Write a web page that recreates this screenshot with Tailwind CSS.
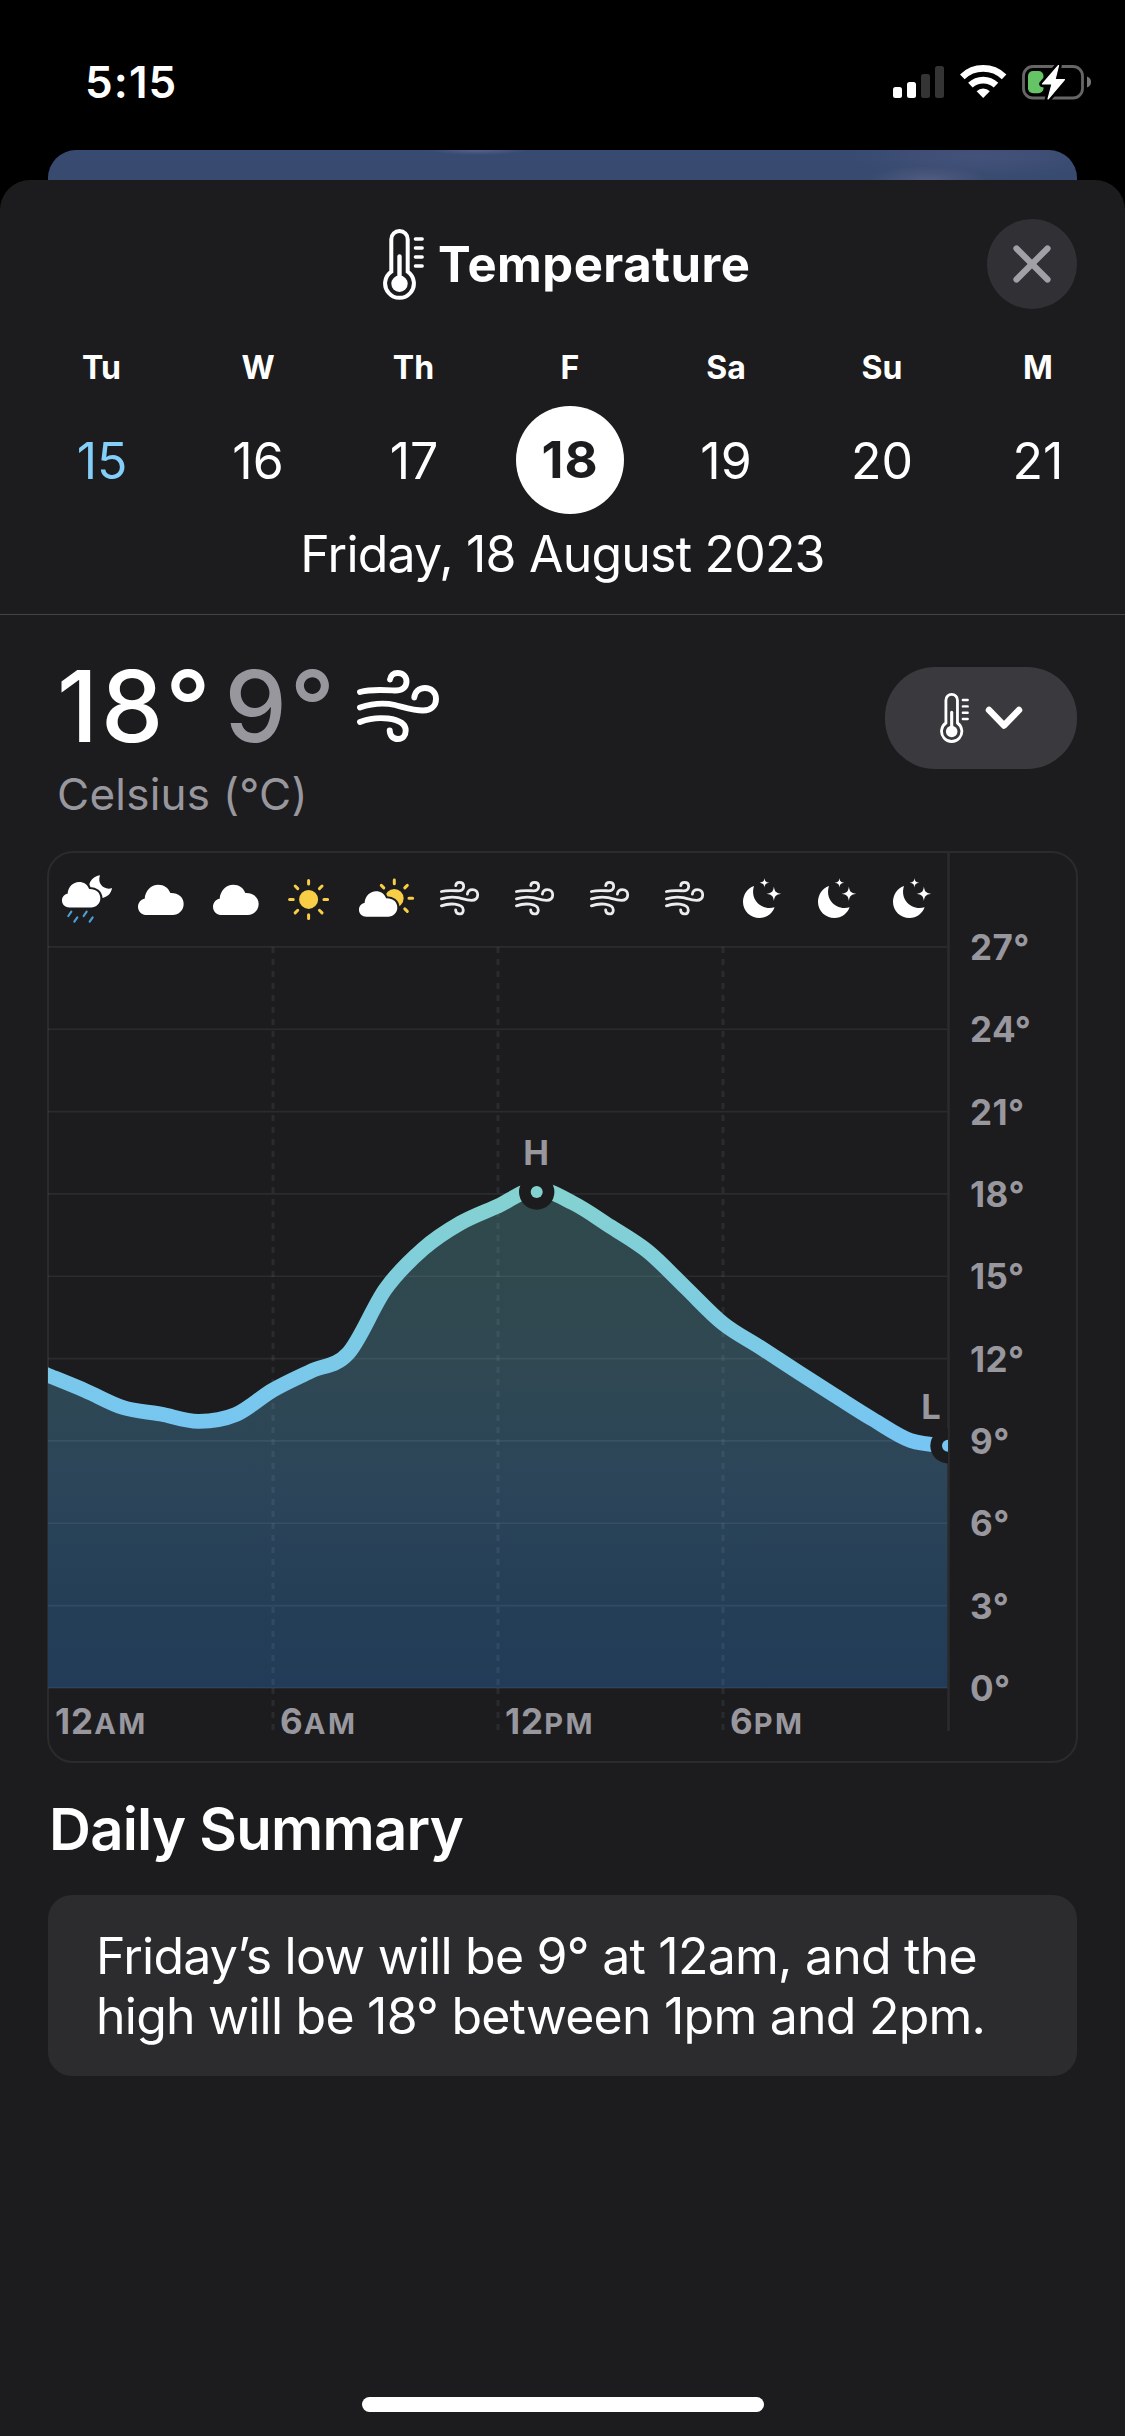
<!DOCTYPE html>
<html lang="en">
<head>
<meta charset="utf-8">
<title>Temperature</title>
<script src="https://cdn.jsdelivr.net/npm/@tailwindcss/browser@4"></script>
</head>
<body class="bg-black">
<div class="flex h-[2436px] w-[1125px] flex-col overflow-hidden bg-black font-['Inter',sans-serif] text-white">

  <svg width="0" height="0" class="absolute">
    <defs>
      <symbol id="thermo" viewBox="0 0 41 71">
        <path d="M8.3 42.6V10.2a8.2 8.2 0 0 1 16.4 0V42.6A14.4 14.4 0 1 1 8.3 42.6Z" fill="none" stroke="#fff" stroke-width="4"/>
        <circle cx="16.5" cy="54.7" r="8.2" fill="#fff"/>
        <path d="M16.5 27.4V52" stroke="#fff" stroke-width="4.4" stroke-linecap="round"/>
        <path d="M32.4 10h6.8M32.4 19h6.8M32.4 28h6.8M32.4 37h6.8" stroke="#fff" stroke-width="3.4" stroke-linecap="round"/>
      </symbol>
      <symbol id="wind" viewBox="0 0 82 72">
        <g fill="none" stroke="currentColor" stroke-width="5.9" stroke-linecap="round">
          <path d="M3 22C14 19 28 20 37 20.5C45 21 49.5 17.5 49.5 11.5C49.5 6.5 46 3 40.5 3C36.5 3 33.5 5.5 33 9.5"/>
          <path d="M3 37.5C12 34.5 25 32 38 35C48 37.5 57 40.5 66 40.5C74 40.5 79 36 79 29C79 22 74 18 68 18C61.5 18 58 22 57.3 27.5"/>
          <path d="M3 52C12 48.5 22 47.5 31 48.5C42 50 48.7 53 48.7 60.5C48.7 65.5 46 69 41 69C36 69 33 66 32.7 60.5"/>
        </g>
      </symbol>
      <path id="cloudshape" d="M27 91C11 91 0 80 0 66C0 54 8 44 20 42C22 18 39 0 61 0C78 0 91 9 97 25C120 24 137 37 137 58C137 77 122 91 104 91Z"/>
      <symbol id="w-cloud" viewBox="0 0 75 94">
        <use href="#cloudshape" fill="#fff" transform="translate(15 31.7) scale(.3333)"/>
      </symbol>
      <symbol id="w-rain" viewBox="0 0 75 94">
        <g transform="translate(-8 -13) scale(.3333)">
          <path d="M180 106C160 109 146 125 148 142C150 162 166 176 184 174C201 173 214 160 216 144C196 152 170 134 180 106Z" fill="#fff"/>
          <g transform="translate(66 126) scale(.84)">
            <use href="#cloudshape" fill="#1c1c1e" stroke="#1c1c1e" stroke-width="15"/>
            <use href="#cloudshape" fill="#fff"/>
          </g>
          <path d="M94 215L85 228M112 232L103 245M140 215L131 228M158 232L149 245" stroke="#4c9fd6" stroke-width="6.5" stroke-linecap="round"/>
        </g>
      </symbol>
      <symbol id="w-sun" viewBox="0 0 75 94">
        <g transform="translate(35.6 46.4) scale(.3333)">
          <circle r="28.5" fill="#f7ce45"/>
          <path d="M0 -57V-46M0 57V46M57 0H46M-57 0H-46M40.3 -40.3L32.5 -32.5M-40.3 -40.3L-32.5 -32.5M40.3 40.3L32.5 32.5M-40.3 40.3L-32.5 32.5" stroke="#f7ce45" stroke-width="9" stroke-linecap="round"/>
        </g>
      </symbol>
      <symbol id="w-suncloud" viewBox="0 0 75 94">
        <g transform="translate(-308 -13) scale(.3333)">
          <g transform="translate(1063 175)">
            <circle r="28" fill="#f7ce45"/>
            <path d="M0 -55V-44M55 0H44M39 -39L31.5 -31.5M-39 -39L-31.5 -31.5M39 39L31.5 31.5" stroke="#f7ce45" stroke-width="9" stroke-linecap="round"/>
          </g>
          <g transform="translate(957 154) scale(.84)">
            <use href="#cloudshape" fill="#1c1c1e" stroke="#1c1c1e" stroke-width="15"/>
            <use href="#cloudshape" fill="#fff"/>
          </g>
        </g>
      </symbol>
      <symbol id="w-moon" viewBox="0 0 75 94">
        <g transform="translate(20 25)" fill="#fff">
          <path d="M11 8C4 10.5 0 17 0 24C0 33 7.5 40 16.5 40C23.5 40 29.5 35.5 31.6 29.3C19 33 6.5 22 11 8Z"/>
          <path d="M21.5 0C21.9 3.2 22.5 4.1 26.3 4.8C22.5 5.5 21.9 6.4 21.5 9.6C21.1 6.4 20.5 5.5 16.7 4.8C20.5 4.1 21.1 3.2 21.5 0Z"/>
          <path d="M30.9 8.4C31.6 13.4 32.6 14.7 38.2 15.7C32.6 16.7 31.6 18 30.9 23C30.2 18 29.2 16.7 23.6 15.7C29.2 14.7 30.2 13.4 30.9 8.4Z"/>
        </g>
      </symbol>
      <symbol id="w-wind" viewBox="0 0 75 94">
        <use href="#wind" x="17" y="28" width="39.2" height="34.4"/>
      </symbol>
    </defs>
  </svg>

  <!-- status bar -->
  <div class="flex h-[150px] shrink-0 justify-between pt-[54px] pr-[33px] pl-[85px]">
    <div class="h-[57px] text-[44px] leading-[57px] font-semibold tracking-[1.1px]">5:15</div>
    <svg width="200" height="38" viewBox="892 63 200 38" class="mt-[9px]">
      <rect x="893" y="87" width="9" height="11" rx="2.5" fill="#fff"/>
      <rect x="907" y="82" width="9" height="16" rx="2.5" fill="#fff"/>
      <rect x="921" y="74" width="9" height="24" rx="2.5" fill="#343434"/>
      <rect x="935" y="66" width="9" height="32" rx="2.5" fill="#343434"/>
      <g fill="none" stroke="#fff">
        <path d="M962.3 76.8A30.2 30.2 0 0 1 1004.1 76.8" stroke-width="6.6"/>
        <path d="M970.4 85.2A18.6 18.6 0 0 1 996 85.2" stroke-width="6.6"/>
      </g>
      <path d="M983.2 98L976.6 91.2A9.4 9.4 0 0 1 989.8 91.2Z" fill="#fff"/>
      <rect x="1023.5" y="66.5" width="59" height="31.5" rx="9.5" fill="none" stroke="#666" stroke-width="2.8"/>
      <path d="M1087 76.5C1090 77.5 1091 79.5 1091 82C1091 84.5 1090 86.5 1087 87.5Z" fill="#777"/>
      <rect x="1028" y="71" width="15.5" height="22.3" rx="5" fill="#65c466"/>
      <path d="M1058.5 65.5L1042.5 84H1052L1048 99L1064.5 79.7H1055Z" fill="#fff" stroke="#000" stroke-width="6.5" stroke-linejoin="round"/>
      <path d="M1058.5 65.5L1042.5 84H1052L1048 99L1064.5 79.7H1055Z" fill="#fff" stroke="#fff" stroke-width="1.2" stroke-linejoin="round"/>
    </svg>
  </div>

  <!-- card behind the sheet -->
  <div class="mx-12 h-[30px] shrink-0 rounded-t-[28px] bg-[#384a70] bg-[radial-gradient(ellipse_60px_14px_at_880px_30px,#525c80,transparent),radial-gradient(ellipse_130px_24px_at_930px_6px,#44527a,transparent),radial-gradient(ellipse_50px_5px_at_430px_0px,#55638a,transparent)]"></div>

  <!-- sheet -->
  <div class="flex grow flex-col rounded-t-[30px] bg-[#1c1c1e]">
    <div class="mt-[39px] flex h-[90px] items-center pr-12 pl-[383px]">
      <svg width="41" height="71"><use href="#thermo"/></svg>
      <h1 class="ml-[14px] pt-[2px] text-[49px] leading-[60px] font-bold tracking-[.5px] whitespace-nowrap">Temperature</h1>
      <button class="ml-auto flex size-[90px] items-center justify-center rounded-full bg-[#313135]">
        <svg width="40" height="40" viewBox="0 0 40 40"><path d="M4.5 4.5L35.5 35.5M35.5 4.5L4.5 35.5" stroke="#a0a0a7" stroke-width="6.2" stroke-linecap="round"/></svg>
      </button>
    </div>

    <div class="mt-[39px] ml-6 grid w-[1092px] grid-cols-7 self-start text-center text-[32px] leading-[40px] font-bold">
      <div class="-ml-px">Tu</div><div>W</div><div class="-ml-px">Th</div><div>F</div><div>Sa</div><div>Su</div><div>M</div>
    </div>
    <div class="mt-[19px] ml-6 grid h-[107px] w-[1092px] grid-cols-7 items-center justify-items-center text-[50px] leading-[60px]">
      <div class="text-[#83cffa]">15</div><div>16</div><div>17</div>
      <div class="-mt-px flex size-[108px] items-center justify-center rounded-full bg-white text-[51px] font-bold tracking-[1px] text-[#1c1c1e]">18</div>
      <div>19</div><div>20</div><div>21</div>
    </div>
    <div class="mt-[10px] text-center text-[50px] leading-[60px] tracking-[-.8px]">Friday, 18 August 2023</div>
    <div class="mt-[30px] h-px bg-[#444446]"></div>

    <div class="mt-[41px] flex h-[163px] items-start pr-12 pl-[57px]">
      <div>
        <div class="flex h-[100px] items-center text-[99px] leading-[100px] font-medium tracking-[3px] whitespace-nowrap">
          <span>18°</span><span class="ml-[11px] text-[#98979e]">9°</span>
          <svg width="82" height="72" class="ml-[19px]"><use href="#wind"/></svg>
        </div>
        <div class="mt-[13px] text-[44px] leading-[50px] tracking-[.25px] text-[#98979e]">Celsius (°C)</div>
      </div>
      <button class="mt-[11px] ml-auto flex h-[102px] w-[192px] items-center rounded-[50px] bg-[#3a393d] pl-[55px]">
        <svg width="29" height="50"><use href="#thermo"/></svg>
        <svg width="38" height="24" viewBox="0 0 38 24" class="ml-4"><path d="M4 4L19 19.5L34 4" fill="none" stroke="#fff" stroke-width="6.5" stroke-linecap="round" stroke-linejoin="round"/></svg>
      </button>
    </div>

    <!-- chart -->
    <div class="mt-8 ml-[47px] flex h-[912px] w-[1031px] rounded-[26px] border-2 border-[#2b2b2d]">
      <div class="-ml-px w-[900px]">
        <div class="grid h-[94px] grid-cols-12 text-[#ececec]">
          <svg width="75" height="94"><use href="#w-rain"/></svg>
          <svg width="75" height="94"><use href="#w-cloud"/></svg>
          <svg width="75" height="94"><use href="#w-cloud"/></svg>
          <svg width="75" height="94"><use href="#w-sun"/></svg>
          <svg width="75" height="94"><use href="#w-suncloud"/></svg>
          <svg width="75" height="94"><use href="#w-wind"/></svg>
          <svg width="75" height="94"><use href="#w-wind"/></svg>
          <svg width="75" height="94"><use href="#w-wind"/></svg>
          <svg width="75" height="94"><use href="#w-wind"/></svg>
          <svg width="75" height="94"><use href="#w-moon"/></svg>
          <svg width="75" height="94"><use href="#w-moon"/></svg>
          <svg width="75" height="94"><use href="#w-moon"/></svg>
        </div>
        <svg width="900" height="741" viewBox="48 947 900 741" class="block overflow-visible">
          <defs>
            <linearGradient id="line" gradientUnits="userSpaceOnUse" x1="0" y1="1190" x2="0" y2="1440">
              <stop offset="0" stop-color="#84d2d0"/><stop offset="1" stop-color="#76c5f3"/>
            </linearGradient>
            <linearGradient id="area" gradientUnits="userSpaceOnUse" x1="0" y1="1190" x2="0" y2="1688">
              <stop offset="0" stop-color="#30494b"/><stop offset=".34" stop-color="#2f4852"/><stop offset=".58" stop-color="#2c4559"/><stop offset=".8" stop-color="#253f57"/><stop offset="1" stop-color="#223b58"/>
            </linearGradient>
            <clipPath id="clip"><rect x="48" y="947" width="900" height="741"/></clipPath>
          </defs>
          <g clip-path="url(#clip)"><path id="fill" fill="url(#area)"/></g>
          <path d="M48 946.9H948M48 1029.2H948M48 1111.6H948M48 1193.9H948M48 1276.2H948M48 1358.6H948M48 1440.9H948M48 1523.3H948M48 1605.6H948M48 1688H948" stroke="#c0c8d8" stroke-opacity=".09" stroke-width="1.6"/>
          <path d="M273 947V1688M273 1688V1731M498 947V1688M498 1688V1731M723 947V1688M723 1688V1731" stroke="#c0c8d8" stroke-opacity=".09" stroke-width="3" stroke-dasharray="6 6"/>
          <path d="M948.5 852V1731" stroke="#2b2b2d" stroke-width="2.5"/>
          <g clip-path="url(#clip)">
            <path id="curve" fill="none" stroke="url(#line)" stroke-width="14.8"/>
            <circle cx="536.7" cy="1192" r="17.7" fill="#1c1c1e"/><circle cx="536.7" cy="1192" r="6" fill="#84d2d0"/>
            <circle cx="948" cy="1445.7" r="17.7" fill="#1c1c1e"/><circle cx="948" cy="1445.7" r="6" fill="#76c5f3"/>
          </g>
          <g fill="#98979e" font-size="34.5" font-weight="700" text-anchor="middle">
            <text x="536.2" y="1164.5">H</text><text x="931" y="1419">L</text>
          </g>
        </svg>
        <div class="grid grid-cols-4 pt-[11px] text-[35px] leading-[44px] font-bold tracking-[1px] text-[#98979e]">
          <div class="pl-[7px]">12<span class="text-[29px] leading-none tracking-[2.5px]">AM</span></div>
          <div class="pl-[7px]">6<span class="text-[29px] leading-none tracking-[2.5px]">AM</span></div>
          <div class="pl-[7px]">12<span class="text-[29px] leading-none tracking-[2.5px]">PM</span></div>
          <div class="pl-[7px]">6<span class="text-[29px] leading-none tracking-[2.5px]">PM</span></div>
        </div>
      </div>
      <div class="flex flex-col pt-[53px] pl-[22px] text-[35px] leading-[82.34px] font-bold tracking-[.4px] text-[#98979e]">
        <div>27°</div><div>24°</div><div>21°</div><div>18°</div><div>15°</div><div>12°</div><div>9°</div><div>6°</div><div>3°</div><div>0°</div>
      </div>
    </div>

    <h2 class="mt-[31px] pl-[49px] text-[58px] leading-[70px] font-semibold tracking-[-.75px]">Daily Summary</h2>
    <div class="mx-12 mt-[31px] flex h-[181px] items-center rounded-3xl bg-[#2c2c2e] pl-[48px] text-[50px] leading-[60px] tracking-[-.77px] whitespace-nowrap">
      <p>Friday’s low will be 9° at 12am, and the<br>high will be 18° between 1pm and 2pm.</p>
    </div>
    <div class="mx-auto mt-auto mb-6 h-[15px] w-[402px] shrink-0 rounded-full bg-white"></div>
  </div>
</div>
<script>
  // centre-line height of the temperature curve at every hour from 12am to 12am
  const ys = [1375.3,1390.7,1407.5,1414,1421.3,1414.7,1390,1371.3,1353.5,1289,1249,1223,1206,1189,1203,1226.5,1251.5,1287.5,1323.5,1347.5,1372,1396,1419.5,1440.5,1446];
  const pts = ys.map((y, i) => [48 + 37.5 * i, y]);
  let d = `M${pts[0]}`;
  for (let i = 0; i < pts.length - 1; i++) {
    const p0 = pts[i - 1] || pts[i], p1 = pts[i], p2 = pts[i + 1], p3 = pts[i + 2] || p2;
    d += `C${p1[0] + (p2[0] - p0[0]) / 6} ${p1[1] + (p2[1] - p0[1]) / 6} ${p2[0] - (p3[0] - p1[0]) / 6} ${p2[1] - (p3[1] - p1[1]) / 6} ${p2}`;
  }
  document.getElementById('curve').setAttribute('d', 'M28 1367L' + d.slice(1));
  document.getElementById('fill').setAttribute('d', d + 'V1688H48Z');
</script>
</body>
</html>
